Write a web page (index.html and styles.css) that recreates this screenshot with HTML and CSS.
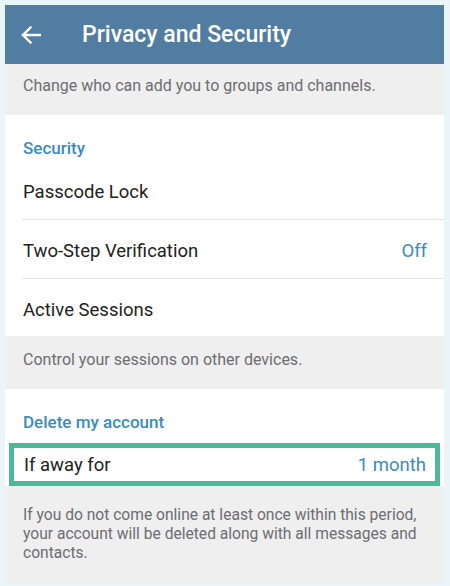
FILE: index.html
```html
<!DOCTYPE html>
<html lang="en">
<head>
    <meta charset="UTF-8">
    <meta name="viewport" content="width=device-width, initial-scale=1.0">
    <title>Privacy and Security</title>
    <link rel="stylesheet" href="styles.css">
</head>
<body>
    <div class="screen">
        <div class="topbar">
            <svg class="back" width="20" height="18" viewBox="0 0 20 18">
                <path d="M19 9H2M9.5 1.5L2 9l7.5 7.5" fill="none" stroke="#fff" stroke-width="2.4" stroke-linecap="square"/>
            </svg>
            <div class="title">Privacy and Security</div>
        </div>

        <div class="hint first">Change who can add you to groups and channels.</div>

        <div class="section">
            <div class="sec-title">Security</div>
            <div class="row"><span>Passcode Lock</span></div>
            <div class="row"><span>Two-Step Verification</span><span class="value">Off</span></div>
            <div class="row last"><span>Active Sessions</span></div>
        </div>

        <div class="hint">Control your sessions on other devices.</div>

        <div class="section">
            <div class="sec-title">Delete my account</div>
            <div class="away">
                <span>If away for</span><span class="value">1 month</span>
            </div>
        </div>

        <div class="hint long">If you do not come online at least once within this period, your account will be deleted along with all messages and contacts.</div>
    </div>
</body>
</html>
```

FILE: styles.css
```css
body {
    margin: 0;
    background: #eaf5f9;
    font-family: Roboto, 'Noto Sans', sans-serif;
    color: #222;
}
.screen {
    width: 439px;
    margin: 5px 0 0 5px;
}
.topbar {
    height: 59px;
    background: #527da3;
    display: flex;
    align-items: center;
}
.back { margin-left: 16px; margin-top: 1px; }
.title {
    color: #fff;
    font-size: 23px;
    font-weight: 500;
    margin-left: 41px;
}
.hint {
    background: #efefef;
    color: #6d6d72;
    font-size: 16px;
    padding: 0 18px;
    height: 53px;
    line-height: 47px;
}
.hint.first { height: 51px; line-height: 44px; }
.hint.long {
    height: auto;
    font-size: 15.6px;
    line-height: 19px;
    padding-top: 20px;
    padding-bottom: 20px;
}
.section { background: #fff; }
.sec-title {
    color: #3a8bc0;
    font-size: 17px;
    font-weight: 500;
    padding: 23px 18px 0;
    height: 23px;
}
.row {
    height: 54px;
    padding-top: 4px;
    margin-left: 17px;
    padding-right: 17px;
    display: flex;
    align-items: center;
    justify-content: space-between;
    font-size: 18.5px;
    border-bottom: 1px solid #e6e6e6;
}
.row.last { border-bottom: none; height: 53px; }
.row span:first-child { padding-left: 1px; }
.value { color: #3a8bc0; }
.away {
    margin: 8px 4px 0 4px;
    height: 33px;
    border: 5px solid #4cba96;
    display: flex;
    align-items: center;
    justify-content: space-between;
    padding: 0 9px 0 10px;
    font-size: 18.5px;
}
.section:last-of-type { padding-bottom: 6px; }
.section:last-of-type .sec-title { height: 26px; padding-top: 23px; }
```
